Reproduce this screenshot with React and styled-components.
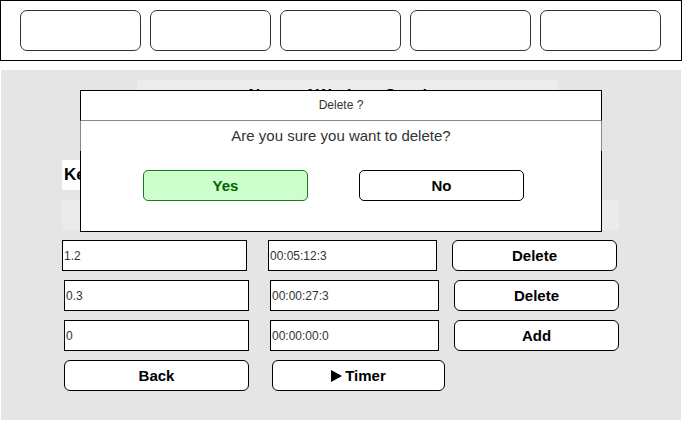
import React from 'react'
import styled, { createGlobalStyle } from 'styled-components'

const GlobalStyle= createGlobalStyle`
  body {
    margin: 0;
    background: #fff;
    font-family: "Liberation Sans", Arial, sans-serif;
  }
  * { box-sizing: border-box; }
`

const TopBar= styled.nav`
  width: 682px;
  height: 61px;
  border: 1px solid #000;
  display: flex;
  gap: 9px;
  padding: 9px 19px;
`
const NavButton= styled.button`
  width: 121px;
  height: 41px;
  border: 1px solid #333;
  border-radius: 7px;
  background: #fff;
  padding: 0;
`

const Panel= styled.main`
  position: relative;
  margin: 9px 0 0 1px;
  width: 680px;
  height: 350px;
  background: #e5e5e5;
  padding-top: 10px;
`
const TitleBox= styled.div`
  margin-left: 136px;
  width: 421px;
  height: 30px;
  background: #ececec;
  text-align: center;
  font-weight: bold;
  font-size: 16px;
  line-height: 22px;
  padding: 5px 0 0 0;
  color: #000;
`
const KeyBox= styled.div`
  margin: 50px 0 0 61px;
  width: 220px;
  height: 30px;
  background: #fff;
  font-weight: bold;
  font-size: 17px;
  line-height: 30px;
  padding-left: 2px;
`
const Strip= styled.div`
  margin: 10px 0 0 61px;
  width: 557px;
  height: 30px;
  background: #ebebeb;
`
const Rows= styled.div`
  margin-top: 10px;
  display: flex;
  flex-direction: column;
  gap: 9px;
`
const Row= styled.div`
  display: flex;
  padding-left: ${p=> p.$indent}px;
`
const Field= styled.input`
  width: ${p=> p.$w}px;
  height: 31px;
  border: 1px solid #000;
  border-radius: 0;
  background: #fff;
  margin: 0 ${p=> p.$gap}px 0 0;
  padding: 0 0 0 1px;
  font-family: "Liberation Sans", Arial, sans-serif;
  font-size: 12px;
  color: #333;
  outline: none;
`
const ActionButton= styled.button`
  width: ${p=> p.$w || 165}px;
  height: 31px;
  margin-right: ${p=> p.$gap || 0}px;
  border: 1px solid #000;
  border-radius: 6px;
  background: #fff;
  padding: 0;
  display: flex;
  align-items: center;
  justify-content: center;
  gap: 3px;
  font-family: "Liberation Sans", Arial, sans-serif;
  font-weight: bold;
  font-size: 15px;
  color: #000;
`
const PlayIcon= styled.svg`
  width: 11px;
  height: 12px;
  fill: #000;
`

const Modal= styled.div`
  position: absolute;
  left: 79px;
  top: 20px;
  width: 522px;
  height: 142px;
  display: flex;
  flex-direction: column;
  background: #fff;
`
const ModalHeader= styled.div`
  height: 31px;
  border: 1px solid #000;
  border-bottom-color: #888;
  text-align: center;
  font-size: 12px;
  line-height: 29px;
  color: #333;
`
const ModalMessage= styled.div`
  height: 30px;
  border-left: 1px solid #888;
  border-right: 1px solid #888;
  text-align: center;
  font-size: 15px;
  line-height: 30px;
  color: #333;
`
const ModalBody= styled.div`
  flex: 1;
  border: 1px solid #000;
  border-top: none;
  display: flex;
  gap: 51px;
  padding: 19px 0 0 62px;
`
const ChoiceButton= styled.button`
  width: 165px;
  height: 31px;
  border: 1px solid ${p=> p.$yes ? '#1b7a1b' : '#000'};
  border-radius: 5px;
  background: ${p=> p.$yes ? '#ccffcc' : '#fff'};
  color: ${p=> p.$yes ? '#006600' : '#000'};
  padding: 0;
  font-family: "Liberation Sans", Arial, sans-serif;
  font-weight: bold;
  font-size: 15px;
`

const laps= [
  { dist: '1.2', time: '00:05:12:3', action: 'Delete', indent: 61 },
  { dist: '0.3', time: '00:00:27:3', action: 'Delete', indent: 63 },
  { dist: '0', time: '00:00:00:0', action: 'Add', indent: 63 },
]

export default function App() {
  return (
    <>
      <GlobalStyle />
      <TopBar>
        {[0, 1, 2, 3, 4].map(i=> <NavButton key={i} />)}
      </TopBar>
      <Panel>
        <TitleBox>Name of Workout Session</TitleBox>
        <KeyBox>Kettlebell Swings</KeyBox>
        <Strip />
        <Rows>
          {laps.map((lap, i)=> (
            <Row key={i} $indent={lap.indent}>
              <Field $w={185} $gap={21} value={lap.dist} readOnly />
              <Field $w={169} $gap={15} value={lap.time} readOnly />
              <ActionButton>{lap.action}</ActionButton>
            </Row>
          ))}
          <Row $indent={63}>
            <ActionButton $w={185} $gap={23}>Back</ActionButton>
            <ActionButton $w={173}>
              <PlayIcon viewBox='0 0 11 12'><path d='M0 0 L11 6 L0 12 Z' /></PlayIcon>
              Timer
            </ActionButton>
          </Row>
        </Rows>
        <Modal>
          <ModalHeader>Delete ?</ModalHeader>
          <ModalMessage>Are you sure you want to delete?</ModalMessage>
          <ModalBody>
            <ChoiceButton $yes>Yes</ChoiceButton>
            <ChoiceButton>No</ChoiceButton>
          </ModalBody>
        </Modal>
      </Panel>
    </>
  )
}
